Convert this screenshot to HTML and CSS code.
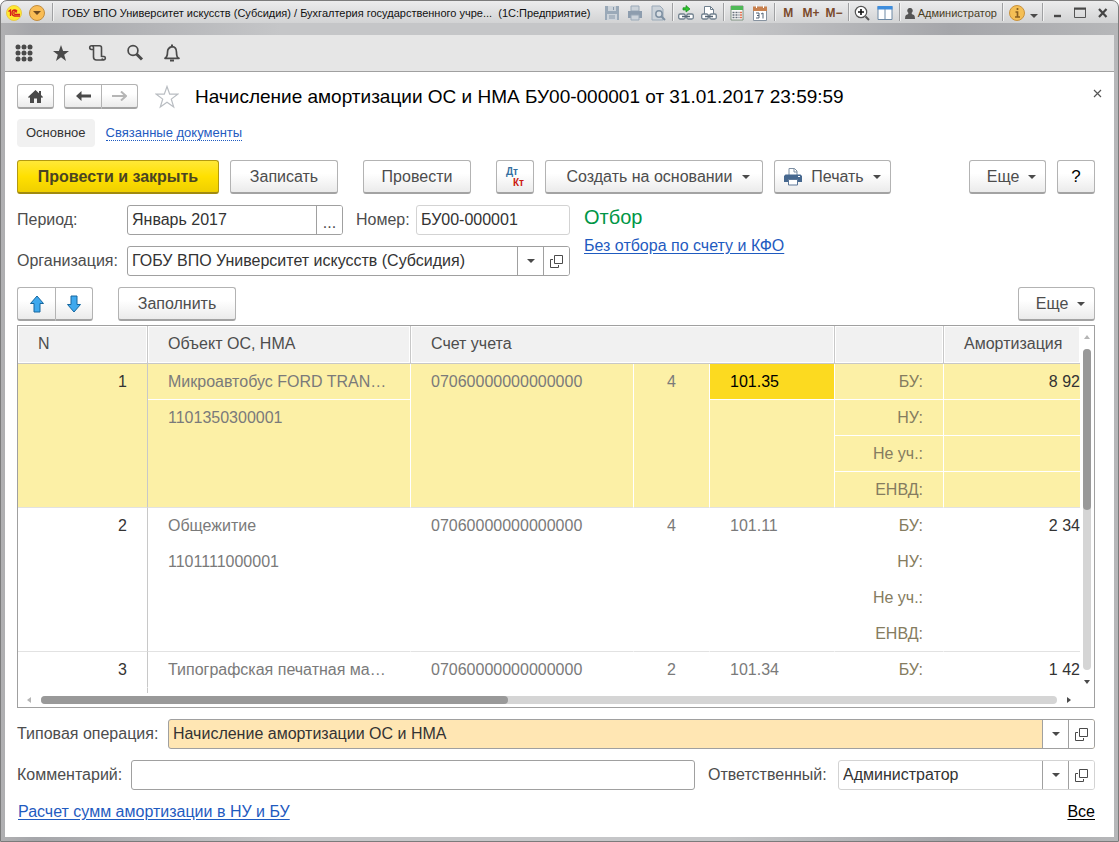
FILE: index.html
```html
<!DOCTYPE html>
<html lang="ru">
<head>
<meta charset="utf-8">
<title>Начисление амортизации ОС и НМА</title>
<link rel="stylesheet" href="styles.css">
</head>
<body>
<svg class="defs" aria-hidden="true">
  <symbol id="open" viewBox="0 0 14 14"><path d="M4.500 1.500h8v8h-8zM3 5.500H.5v8h8V11" fill="none" stroke="#4a4a4a"/></symbol>
  <symbol id="down" viewBox="0 0 8 4"><path d="M0 0h8L4 4z" fill="#4a4a4a"/></symbol>
  <symbol id="printer" viewBox="0 0 18 18"><path d="M5 7V.5h5.500L13 3v4" fill="#fff" stroke="#7d8fa3"/><path d="M10 .5V4h3" fill="none" stroke="#7d8fa3"/><path d="M1.500 6.500h15L18 8v6H0V8z" fill="#46688f"/><path d="M4.500 11.500h9v5.500h-9z" fill="#fff" stroke="#5c7798"/><path d="M14 8.500h2" stroke="#fff"/></symbol>
</svg>
<div class="window">
  <header class="titlebar">
    <svg class="logo" viewBox="0 0 16 16"><circle cx="8" cy="8" r="7.500" fill="#ffe92e" stroke="#e8c84a"/><path d="M2.500 6.500 4.500 5v6M11 6.200Q10 5 8.500 5 6 5.200 6 8t2.500 3H14M11 7.300Q10 6.500 9 6.600 7.800 6.800 7.800 8T9 9.400h5" fill="none" stroke="#d8201c" stroke-width="1.300"/></svg>
    <button class="main-menu" aria-label="Главное меню"><svg width="16" height="16" viewBox="0 0 16 16"><circle cx="8" cy="8" r="7.500" fill="#f9bd55" stroke="#c18c3e"/><path d="M4 6h8l-4 4z" fill="#6e4a20"/></svg></button>
    <i class="sep"></i>
    <span class="caption">ГОБУ ВПО Университет искусств (Субсидия) / Бухгалтерия государственного учре...&nbsp; (1С:Предприятие)</span>
    <div class="tools">
      <button class="tool" aria-label="Сохранить"><svg viewBox="0 0 16 16"><path d="M1 1h14v14H1z" fill="#9aa9b8"/><path d="M4 1h8v5H4zM3 9h10v6H3z" fill="#ccd3da"/><path d="M5 11h6M5 13h6M9.500 2v3" stroke="#8898a9"/></svg></button>
      <button class="tool" aria-label="Печать"><svg viewBox="0 0 16 16"><path d="M4 1h8v5H4z" fill="#ccd3da" stroke="#9aa9b8"/><path d="M1 6h14v7H1z" fill="#8d9dae"/><path d="M4 10h8v5H4z" fill="#ccd3da" stroke="#9aa9b8"/></svg></button>
      <button class="tool" aria-label="Просмотр"><svg viewBox="0 0 16 16"><path d="M2 1h8l3 3v11H2z" fill="#ccd3da" stroke="#9aa9b8"/><circle cx="9" cy="9" r="3.200" fill="#d9dfe4" stroke="#7e90a2" stroke-width="1.500"/><path d="m11.500 11.500 3.500 3.500" stroke="#7e90a2" stroke-width="2"/></svg></button>
      <i class="sep"></i>
      <button class="tool" aria-label="Получить ссылку"><svg viewBox="0 0 16 16"><path d="M5 2.800h3V.5L12 4 8 7V5H5z" fill="#2fc52f" stroke="#168a1a" stroke-width=".7"/><rect x=".7" y="9" width="6.500" height="5" rx="1.500" fill="#fff" stroke="#70808e" stroke-width="1.300"/><rect x="8.800" y="9" width="6.500" height="5" rx="1.500" fill="#fff" stroke="#70808e" stroke-width="1.300"/><path d="M4 11.500h8" stroke="#566674" stroke-width="1.500"/></svg></button>
      <button class="tool" aria-label="Перейти по ссылке"><svg viewBox="0 0 16 16"><path d="M3.500 9V1.500h6l3 3V9" fill="#fff" stroke="#70808e"/><path d="M9.500 1.500v3h3" fill="none" stroke="#70808e"/><rect x=".7" y="9" width="6.500" height="5" rx="1.500" fill="#fff" stroke="#70808e" stroke-width="1.300"/><rect x="8.800" y="9" width="6.500" height="5" rx="1.500" fill="#fff" stroke="#70808e" stroke-width="1.300"/><path d="M4 11.500h8" stroke="#566674" stroke-width="1.500"/></svg></button>
      <i class="sep"></i>
      <button class="tool" aria-label="Калькулятор"><svg viewBox="0 0 16 16"><path d="M2 1h12v14H2z" fill="#fafafa" stroke="#7f9180"/><path d="M2 1h12v4H2z" fill="#4fb957"/><path d="M3.500 7.500h7M3.500 10h7M3.500 12.500h7" stroke="#66707a" stroke-dasharray="2 1" stroke-width="1.500"/><path d="M11 7.500h2M11 10h2M11 12.500h2" stroke="#e07050" stroke-width="1.500"/></svg></button>
      <button class="tool" aria-label="Календарь"><svg viewBox="0 0 16 16"><path d="M1.500 2.500h13v13h-13z" fill="#fff" stroke="#8793a0"/><path d="M1 1.500h14V6H1z" fill="#c8814f"/><path d="M4.500 0v3M11.500 0v3" stroke="#fff"/><path d="M4 8h3v5H4M5 10.500h2M9 9l2-1v5.500" fill="none" stroke="#526375"/></svg></button>
      <i class="sep"></i>
      <button class="tool memory">M</button>
      <button class="tool memory">M+</button>
      <button class="tool memory">M−</button>
      <i class="sep"></i>
      <button class="tool" aria-label="Масштаб"><svg viewBox="0 0 16 16"><circle cx="7" cy="7" r="5.700" fill="#fff" stroke="#555" stroke-width="1.200"/><path d="M4 7h6M7 4v6" stroke="#111" stroke-width="1.600"/><path d="m11.500 11.500 3.500 3.500" stroke="#555" stroke-width="2"/></svg></button>
      <button class="tool" aria-label="Панели"><svg viewBox="0 0 16 16"><path d="M1 1.500h14v13H1z" fill="#fff" stroke="#6d89a5"/><path d="M.5 1h15v3.500H.5z" fill="#3e8ddd"/><path d="M8 4v10" stroke="#6d89a5"/></svg></button>
      <i class="sep"></i>
      <button class="user"><svg width="10" height="11" viewBox="0 0 10 11"><path d="M5 0a2.500 2.700 0 0 1 1.500 5Q6.500 6.500 9 7q1 1 1 4H0q0-3 1-4 2.500-.5 2.500-2A2.500 2.700 0 0 1 5 0z" fill="#555"/></svg>Администратор</button>
      <i class="sep"></i>
      <button class="tool" aria-label="Информация"><svg viewBox="0 0 16 16"><circle cx="8" cy="8" r="7.500" fill="#f4bf55" stroke="#c9923c"/><path d="M8.500 3v2M6.500 7H8.500v5M6 12h5" fill="none" stroke="#8a6020" stroke-width="1.700"/></svg></button>
      <button class="tool-drop" aria-label="Параметры"><svg width="8" height="4"><use href="#down"/></svg></button>
      <i class="sep"></i>
      <button class="tool" aria-label="Свернуть"><svg viewBox="0 0 16 16"><path d="M5 11h7" stroke="#484848" stroke-width="2.400"/></svg></button>
      <button class="tool" aria-label="Развернуть"><svg viewBox="0 0 16 16"><path d="M2.500 4h11v8.500h-11z" fill="none" stroke="#555"/><path d="M2 3.500h12" stroke="#484848" stroke-width="2"/></svg></button>
      <button class="tool" aria-label="Закрыть"><svg viewBox="0 0 16 16"><path d="m4 4 7.500 8M11.500 4 4 12" stroke="#444" stroke-width="2.200"/></svg></button>
    </div>
  </header>

  <nav class="sections">
    <button aria-label="Меню функций"><svg viewBox="0 0 20 20"><g fill="#4a4a4a"><circle cx="4" cy="4" r="2.500"/><circle cx="10" cy="4" r="2.500"/><circle cx="16" cy="4" r="2.500"/><circle cx="4" cy="10" r="2.500"/><circle cx="10" cy="10" r="2.500"/><circle cx="16" cy="10" r="2.500"/><circle cx="4" cy="16" r="2.500"/><circle cx="10" cy="16" r="2.500"/><circle cx="16" cy="16" r="2.500"/></g></svg></button>
    <button aria-label="Избранное"><svg viewBox="0 0 20 20"><path d="m10 2 2.100 6H18l-4.800 3.700L15 18l-5-3.800L5 18l1.800-6.300L2 8h5.900z" fill="#4a4a4a"/></svg></button>
    <button aria-label="История"><svg viewBox="0 0 20 20"><path d="M5.500 6.500H3.500a1.900 1.900 0 1 1 2-2V14q0 3 3 3H16M4 2.700h7.500q2 0 2 2V14M13.500 13.500H16a1.700 1.700 0 1 1-2 2" fill="none" stroke="#4a4a4a" stroke-width="1.600"/></svg></button>
    <button aria-label="Поиск"><svg viewBox="0 0 20 20"><circle cx="8" cy="7.500" r="4.900" fill="none" stroke="#4a4a4a" stroke-width="1.700"/><path d="m11.500 11 5.500 5.500" stroke="#4a4a4a" stroke-width="3"/></svg></button>
    <button aria-label="Оповещения"><svg viewBox="0 0 20 20"><path d="M3 15.300q2.500-1.500 2.500-6T10 3.700q4.500.1 4.500 5.600t2.500 6z" fill="none" stroke="#4a4a4a" stroke-width="1.700" stroke-linejoin="round"/><path d="M10 1.500v2M8 17.500h4" stroke="#4a4a4a" stroke-width="2"/></svg></button>
  </nav>

  <main class="form">
    <div class="heading">
      <button class="btn home" aria-label="Домой"><svg width="15" height="13" viewBox="0 0 15 13"><path d="M7.500 0 11 3.200V1h2v4l2 2-1 1-1-.8V13H9V8.500H6V13H2V7.200L1 8 0 7z" fill="#4a4a4a"/></svg></button>
      <div class="pair">
        <button class="btn" aria-label="Назад"><svg width="15" height="10" viewBox="0 0 15 10"><path d="M5.500 0 0 5l5.500 5V6.400H15V3.600H5.500z" fill="#4a4a4a"/></svg></button>
        <button class="btn" aria-label="Вперед"><svg width="15" height="10" viewBox="0 0 15 10"><path d="M9 .5 14 5 9 9.500M0 5h13" fill="none" stroke="#b5b5b5" stroke-width="2"/></svg></button>
      </div>
      <button class="fav" aria-label="В избранное"><svg width="24" height="24" viewBox="0 0 24 24"><path d="m12 1.500 2.700 7.700h8l-6.400 4.900 2.400 7.900-6.700-4.800L5.300 22l2.400-7.900-6.400-4.900h8z" fill="#fff" stroke="#b9bdc2" stroke-width="1.200"/></svg></button>
      <h1>Начисление амортизации ОС и НМА БУ00-000001 от 31.01.2017 23:59:59</h1>
      <button class="close" aria-label="Закрыть форму"><svg width="9" height="9" viewBox="0 0 9 9"><path d="m1 1 7 7M8 1 1 8" stroke="#555" stroke-width="1.200"/></svg></button>
    </div>

    <div class="tabs">
      <a class="tab" href="#">Основное</a>
      <a class="related" href="#">Связанные документы</a>
    </div>

    <div class="commands">
      <button class="btn primary">Провести и закрыть</button>
      <button class="btn wide">Записать</button>
      <button class="btn wide apart">Провести</button>
      <button class="btn square apart" aria-label="Проводки"><span class="dtkt"><span class="dt">Дт</span><span class="kt">Кт</span></span></button>
      <button class="btn create">Создать на основании<svg width="8" height="4"><use href="#down"/></svg></button>
      <button class="btn print"><svg width="18" height="18"><use href="#printer"/></svg>Печать<svg width="8" height="4"><use href="#down"/></svg></button>
      <button class="btn more">Еще<svg width="8" height="4"><use href="#down"/></svg></button>
      <button class="btn square help">?</button>
    </div>

    <div class="details">
      <div class="fields">
        <div class="row">
          <label class="key" for="period">Период:</label>
          <div class="field period"><input id="period" value="Январь 2017"><button aria-label="Выбрать период">...</button></div>
          <label class="number-key" for="number">Номер:</label>
          <div class="field pale grow"><input id="number" value="БУ00-000001"></div>
        </div>
        <div class="row">
          <label class="key" for="org">Организация:</label>
          <div class="field grow"><input id="org" value="ГОБУ ВПО Университет искусств (Субсидия)"><button aria-label="Список"><svg width="8" height="4"><use href="#down"/></svg></button><button aria-label="Открыть"><svg width="14" height="14"><use href="#open"/></svg></button></div>
        </div>
      </div>
      <div class="filter">
        <h2>Отбор</h2>
        <a href="#">Без отбора по счету и КФО</a>
      </div>
    </div>

    <div class="commands">
      <div class="pair arrows">
        <button class="btn" aria-label="Вверх"><svg width="16" height="18" viewBox="0 0 16 18"><path d="m8 1 6.500 7.500H11V17H5V8.500H1.500z" fill="#3fa9ee" stroke="#17679f"/></svg></button>
        <button class="btn" aria-label="Вниз"><svg width="16" height="18" viewBox="0 0 16 18"><path d="m8 17 6.500-7.500H11V1H5v8.500H1.500z" fill="#3fa9ee" stroke="#17679f"/></svg></button>
      </div>
      <button class="btn fill apart">Заполнить</button>
      <button class="btn more">Еще<svg width="8" height="4"><use href="#down"/></svg></button>
    </div>

    <section class="grid">
      <div class="view">
        <table>
          <colgroup><col class="c-n"><col class="c-obj"><col class="c-acc"><col class="c-kfo"><col class="c-sub"><col class="c-kind"><col></colgroup>
          <thead><tr><th>N</th><th>Объект ОС, НМА</th><th colspan="3">Счет учета</th><th></th><th class="sum-head">Амортизация</th></tr></thead>
          <tbody class="selected">
            <tr><td class="n end" rowspan="4">1</td><td>Микроавтобус FORD TRANSIT</td><td class="end" rowspan="4">07060000000000000</td><td class="end num" rowspan="4">4</td><td class="current">101.35</td><td class="num kind">БУ:</td><td class="sum">8 92</td></tr>
            <tr><td class="end" rowspan="3">1101350300001</td><td class="end" rowspan="3"></td><td class="num kind">НУ:</td><td></td></tr>
            <tr><td class="num kind">Не уч.:</td><td></td></tr>
            <tr><td class="num kind end">ЕНВД:</td><td class="end"></td></tr>
          </tbody>
          <tbody>
            <tr><td class="n end" rowspan="4">2</td><td>Общежитие</td><td class="end" rowspan="4">07060000000000000</td><td class="end num" rowspan="4">4</td><td>101.11</td><td class="num kind">БУ:</td><td class="sum">2 34</td></tr>
            <tr><td class="end" rowspan="3">1101111000001</td><td class="end" rowspan="3"></td><td class="num kind">НУ:</td><td></td></tr>
            <tr><td class="num kind">Не уч.:</td><td></td></tr>
            <tr><td class="num kind end">ЕНВД:</td><td class="end"></td></tr>
          </tbody>
          <tbody>
            <tr><td class="n">3</td><td>Типографская печатная машина</td><td>07060000000000000</td><td class="num">2</td><td>101.34</td><td class="num kind">БУ:</td><td class="sum">1 42</td></tr>
            <tr><td class="n"></td><td></td><td></td><td></td><td></td><td></td><td></td></tr>
          </tbody>
        </table>
      </div>
      <div class="vbar">
        <svg width="6" height="4" viewBox="0 0 6 4"><path d="M0 4h6L3 0z" fill="#b5b5b5"/></svg>
        <div class="track"><div class="thumb"></div></div>
        <svg width="6" height="4" viewBox="0 0 6 4"><path d="M0 0h6L3 4z" fill="#4a4a4a"/></svg>
      </div>
      <div class="hbar">
        <svg width="4" height="6" viewBox="0 0 4 6"><path d="M4 0v6L0 3z" fill="#b5b5b5"/></svg>
        <div class="track"><div class="thumb"></div></div>
        <svg width="4" height="6" viewBox="0 0 4 6"><path d="M0 0v6l4-3z" fill="#4a4a4a"/></svg>
      </div>
    </section>

    <div class="row">
      <label class="operation-key" for="operation">Типовая операция:</label>
      <div class="field grow tinted"><input id="operation" value="Начисление амортизации ОС и НМА"><button aria-label="Список"><svg width="8" height="4"><use href="#down"/></svg></button><button aria-label="Открыть"><svg width="14" height="14"><use href="#open"/></svg></button></div>
    </div>
    <div class="row">
      <label class="comment-key" for="comment">Комментарий:</label>
      <div class="field grow"><input id="comment"></div>
      <label class="resp-key" for="resp">Ответственный:</label>
      <div class="field pale resp"><input id="resp" value="Администратор"><button aria-label="Список"><svg width="8" height="4"><use href="#down"/></svg></button><button aria-label="Открыть"><svg width="14" height="14"><use href="#open"/></svg></button></div>
    </div>
    <footer class="links">
      <a href="#">Расчет сумм амортизации в НУ и БУ</a>
      <a class="all" href="#">Все</a>
    </footer>
  </main>
</div>
</body>
</html>
```

FILE: styles.css
```css
* { box-sizing: border-box; }

body {
  margin: 0;
  background: #fff;
  color: #4d4d4d;
  font: 16px/20px "Liberation Sans", Arial, sans-serif;
}

button, input { font: inherit; color: inherit; margin: 0; }
button { padding: 0; border: 0; background: none; }
svg { flex: none; }
.defs { display: none; }

.window {
  display: flex;
  flex-direction: column;
  height: 100vh;
  min-height: 640px;
  padding: 0 4px 4px;
  border: 1px solid #7b7b7b;
  border-radius: 7px 7px 0 0;
  background:
    linear-gradient(#ececed, #d2d3d4 22px, transparent 22px),
    linear-gradient(90deg, #b0b0b2, #a5a6aa 3%, #c5c6c8 25%, #c5c6c8 65%, #a5a6aa 85%, #b6b7b9);
}

/* Title bar */
.titlebar {
  display: flex;
  flex: none;
  align-items: flex-start;
  height: 34px;
  padding-top: 1px;
  color: #111;
  font: 11px/22px "Liberation Sans", Arial, sans-serif;
}
.logo { width: 16px; height: 16px; margin: 3px 0 0 1px; }
.main-menu { display: flex; margin: 3px 5px 0 7px; }
.sep {
  flex: none;
  width: 1px;
  height: 18px;
  margin: 1px 2px 0;
  background: #9fa0a2;
  box-shadow: 1px 0 #f2f2f2;
}
.caption {
  flex: 1;
  min-width: 0;
  margin-left: 7px;
  overflow: hidden;
  white-space: nowrap;
}
.tools { display: flex; flex: none; }
.tool, .tool-drop {
  display: flex;
  align-items: center;
  justify-content: center;
  width: 23px;
  height: 22px;
}
.tool svg { width: 16px; height: 16px; }
.tool-drop { width: 12px; padding-top: 6px; }
.memory { color: #7b4a2c; font-size: 12px; font-weight: bold; }
.user { display: flex; align-items: center; gap: 3px; height: 22px; padding: 0 3px; color: #49401f; }

/* Section bar */
.sections {
  display: flex;
  flex: none;
  align-items: center;
  height: 37px;
  border-bottom: 1px solid #a0a0a0;
  background: #e6e6e6;
}
.sections button { display: flex; justify-content: center; width: 37px; }
.sections svg { width: 20px; height: 20px; }

/* Form */
.form {
  display: flex;
  flex: 1;
  flex-direction: column;
  min-height: 0;
  padding: 12px 19px 15px 12px;
  background: #fff;
}

.btn {
  display: flex;
  align-items: center;
  justify-content: center;
  height: 34px;
  border: 1px solid #b3b3b3;
  border-bottom: 2px solid #a3a3a3;
  border-radius: 3px;
  background: linear-gradient(#fff 40%, #ebebeb);
  white-space: nowrap;
}
.pair { display: flex; }
.pair .btn { width: 37px; }
.pair .btn:first-child { border-radius: 3px 0 0 3px; border-right: 0; }
.pair .btn:last-child { border-radius: 0 3px 3px 0; }
.arrows .btn { width: 38px; }

.heading { display: flex; align-items: center; height: 25px; }
.heading .btn { height: 25px; }
.home { width: 37px; margin-right: 10px; }
.fav { display: flex; margin: 0 16px 0 17px; }
h1 {
  margin: 0;
  color: #000;
  font-size: 19px;
  font-weight: normal;
  line-height: 24px;
  white-space: nowrap;
}
.close { display: flex; width: 9px; height: 16px; margin: 0 -7px 0 auto; }

.tabs {
  display: flex;
  align-items: center;
  gap: 11px;
  margin: 10px 0 13px;
  font-size: 13px;
}
.tab {
  padding: 4px 9px;
  border-radius: 4px;
  background: #f1f1f1;
  color: #333;
  text-decoration: none;
}
.related {
  border-bottom: 1px dotted #1f5bc0;
  color: #1f5bc0;
  line-height: 15px;
  text-decoration: none;
}

.commands { display: flex; gap: 11px; }
.primary {
  width: 202px;
  border-color: #b39a10;
  border-bottom-color: #a08a10;
  background: linear-gradient(#ffe838, #ffe000 50%, #efcf00);
  color: #4a4423;
  font-weight: bold;
}
.wide { width: 108px; }
.apart { margin-left: 14px; }
.square { width: 38px; }
.create { gap: 9px; width: 218px; padding-left: 8px; }
.print { gap: 9px; width: 117px; }
.more { gap: 9px; width: 77px; margin-left: auto; padding-left: 8px; }
.help { color: #000; font-size: 17px; }
.dtkt { display: flex; flex-direction: column; width: 18px; font-size: 10px; font-weight: bold; line-height: 11px; }
.dt { color: #336f9f; text-align: left; }
.kt { color: #cc1a10; text-align: right; }

.details { display: flex; gap: 14px; margin: 11px 0; }
.fields { display: flex; flex: none; flex-direction: column; gap: 11px; width: 553px; }
.row { display: flex; align-items: center; margin-bottom: 11px; }
.fields .row { margin-bottom: 0; }
.key { width: 110px; }
.number-key { width: 60px; margin-left: 13px; }
.field {
  display: flex;
  height: 30px;
  overflow: hidden;
  border: 1px solid #a0a0a0;
  border-radius: 3px;
  background: #fff;
}
.field input {
  flex: 1;
  min-width: 0;
  padding: 0 4px;
  border: 0;
  outline: 0;
  background: none;
  color: #333;
}
.field button {
  display: flex;
  flex: none;
  align-items: center;
  justify-content: center;
  width: 26px;
  border-left: 1px solid #a0a0a0;
  background: #fff;
}
.pale { border-color: #d3d3d3; }
.tinted { background: #ffe6b3; }
.grow { flex: 1; }
.period { width: 216px; }
.period button { padding-top: 6px; }
.resp { width: 257px; }
.resp-key { width: 130px; margin-left: 13px; }
.operation-key { width: 151px; }
.comment-key { width: 114px; }

.filter h2 { margin: 0 0 7px; color: #009646; font-size: 20px; font-weight: normal; line-height: 24px; }
.filter a, .links a { color: #1f5bc0; text-underline-offset: 2px; }

.fill { width: 118px; }

/* Table */
.grid {
  display: grid;
  flex: 1;
  grid-template: minmax(0, 1fr) 14px / minmax(0, 1fr) 14px;
  min-height: 0;
  margin: 4px 0 11px;
  border: 1px solid #a0a0a0;
}
.view { overflow: hidden; }
table { width: 100%; table-layout: fixed; border-spacing: 0; }
.c-n { width: 130px; }
.c-obj { width: 263px; }
.c-acc { width: 223px; }
.c-kfo { width: 76px; }
.c-sub { width: 125px; }
.c-kind { width: 109px; }
th, td {
  height: 36px;
  padding: 8px 20px 7px;
  overflow: hidden;
  border: 0 solid #fff;
  border-width: 0 1px 1px 0;
  text-align: left;
  text-overflow: ellipsis;
  vertical-align: top;
  white-space: nowrap;
}
th {
  height: 38px;
  border-color: #c8c8c8;
  background: #f1f1f1;
  box-shadow: inset 0 0 0 1px #fff;
  font-weight: normal;
}
td { color: #7a7a7a; }
td.end { border-bottom-color: #e2e2e2; }
td:last-child, th:last-child { border-right: 0; }
.n { border-right-color: #c8c8c8; color: #333; text-align: right; }
.num { text-align: right; }
.num:not(.kind) { padding-right: 33px; }
.kind { color: #857c60; }
.sum-head { padding-right: 0; }
.sum { padding-right: 0; color: #333; text-align: right; }
.selected td { background: #fcf0a6; }
.selected .current { background: #fcda20; color: #000; }

.vbar { display: flex; flex-direction: column; align-items: center; padding: 9px 0; }
.hbar { display: flex; align-items: center; padding: 0 9px; }
.track { flex: 1; border-radius: 4px; background: #d5d5d5; }
.thumb { border-radius: 4px; background: #999; }
.vbar .track { width: 8px; margin: 10px 0; }
.vbar .thumb { width: 8px; height: 50%; }
.hbar .track { height: 8px; margin: 0 10px; }
.hbar .thumb { width: 46%; height: 8px; }

.links { display: flex; justify-content: space-between; padding: 1px 0 0 1px; }
.links .all { color: #000; }
```
